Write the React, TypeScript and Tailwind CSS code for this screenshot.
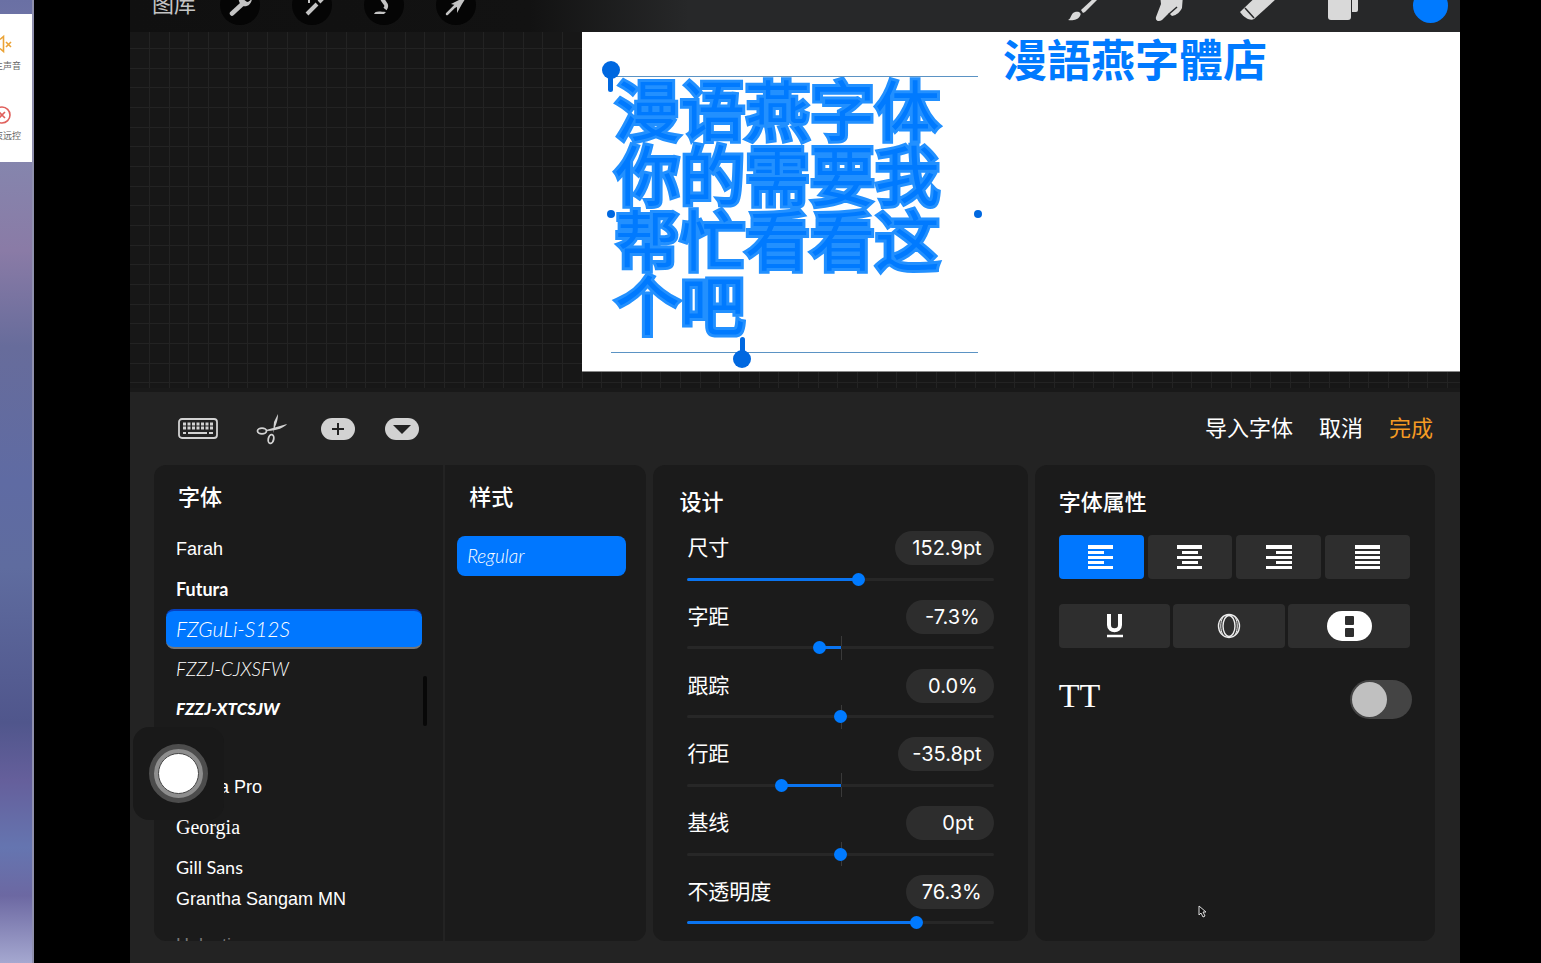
import { useState } from "react";
import type { CSSProperties, ReactNode } from "react";

type FontItem = { name: string; className: string };

const fonts: FontItem[] = [
  { name: "Farah", className: "h-10 items-center font-['Liberation_Sans',sans-serif] text-lg" },
  { name: "Futura", className: "h-10 items-center font-['Lato',sans-serif] text-lg font-bold" },
  { name: "FZGuLi-S12S", className: "h-10 items-center font-['Lato',sans-serif] text-[21px] font-light italic" },
  { name: "FZZJ-CJXSFW", className: "h-10 items-center font-['Lato',sans-serif] text-[19px] font-light italic" },
  { name: "FZZJ-XTCSJW", className: "h-10 items-center font-['Lato',sans-serif] text-[17px] font-black italic" },
  { name: "Geeza Pro", className: "mt-[38px] h-10 items-center font-['Liberation_Sans',sans-serif] text-lg" },
  { name: "Georgia", className: "h-10 items-center font-['Liberation_Serif',serif] text-xl" },
  { name: "Gill Sans", className: "h-10 items-center font-['Lato',sans-serif] text-lg" },
  { name: "Grantha Sangam MN", className: "h-[38px] items-start font-['Liberation_Sans',sans-serif] text-lg leading-6" },
  { name: "Helvetica", className: "h-10 items-center font-['Liberation_Sans',sans-serif] text-lg text-[#777]" },
];

type Setting = { id: string; label: string; value: string; percent: number; centered: boolean; box: string };

const settings: Setting[] = [
  { id: "size", label: "尺寸", value: "152.9pt", percent: 56, centered: false, box: "w-[99px] pr-3" },
  { id: "kerning", label: "字距", value: "-7.3%", percent: 43, centered: true, box: "w-[88px] pr-3.5" },
  { id: "tracking", label: "跟踪", value: "0.0%", percent: 50, centered: true, box: "w-[88px] pr-4" },
  { id: "leading", label: "行距", value: "-35.8pt", percent: 30, centered: true, box: "w-[96px] pr-3" },
  { id: "baseline", label: "基线", value: "0pt", percent: 50, centered: true, box: "w-[88px] pr-5" },
  { id: "opacity", label: "不透明度", value: "76.3%", percent: 76, centered: false, box: "w-[88px] pr-3" },
];

const alignments = [
  { label: "左对齐", lines: [[0, 25], [0, 16], [0, 25], [0, 16], [0, 25]] },
  { label: "居中", lines: [[0, 25], [5, 16], [0, 25], [5, 16], [0, 25]] },
  { label: "右对齐", lines: [[0, 26], [10, 16], [0, 26], [10, 16], [0, 26]] },
  { label: "两端对齐", lines: [[0, 25], [0, 25], [0, 25], [0, 25], [0, 25]] },
];

export default function App() {
  return (
    <div className="flex h-screen overflow-hidden bg-black font-['Roboto','Noto_Sans_CJK_SC',sans-serif] text-white">
      <DesktopStrip />
      <main className="relative mr-[81px] ml-24 flex min-w-0 flex-1 flex-col overflow-hidden bg-[#232323]">
        <TopBar />
        <Canvas />
        <TextPanel />
        <AssistiveButton />
      </main>
    </div>
  );
}

function DesktopStrip() {
  return (
    <aside className="w-[34px] shrink-0 overflow-hidden border-r-2 border-[#8f90ad] bg-[linear-gradient(to_bottom,#6a70a4_0%,#8585ad_17%,#8a7ba6_26%,#676c9b_36%,#5f6ba3_50%,#5f6c9f_59%,#50568c_75%,#655f9b_81%,#6575b0_88%,#6c68a2_93%,#a5a8d0_100%)] pt-3.5">
      <div className="flex h-[148px] flex-col bg-white text-[9px] leading-4 text-[#666]">
        <div className="mt-5 flex h-[70px] flex-col">
          <svg viewBox="0 0 12 20" className="h-5 w-3" fill="none" stroke="#eba336" strokeWidth="1.6">
            <path d="M0 5.500 3.500 2.500v15L0 14.500M6 8l5 5M11 8l-5 5" />
          </svg>
          <p className="mt-1 flex w-[21px] justify-end whitespace-nowrap">主声音</p>
        </div>
        <div className="flex flex-col">
          <svg viewBox="0 0 12 20" className="h-5 w-3" fill="none" stroke="#e0605c" strokeWidth="1.6">
            <circle cx="2" cy="11" r="8" />
            <path d="m-1 8 6 6M5 8l-6 6" />
          </svg>
          <p className="mt-1 flex w-[21px] justify-end whitespace-nowrap">束远控</p>
        </div>
      </div>
    </aside>
  );
}

function TopBar() {
  return (
    <header className="h-8 shrink-0 overflow-hidden bg-[linear-gradient(to_right,#101010_0%,#121212_30%,#272829_42%,#272829_100%)]">
      <div className="-mt-[22px] flex h-[54px] items-center justify-between pr-2.5 pl-[22px]">
        <div className="flex items-center gap-8 text-[#c4c4c4]">
          <button className="-mr-2 text-[22px] leading-8">图库</button>
          <ToolButton label="操作">
            <path d="M12 28.500 24 17.500" stroke="currentColor" strokeWidth="4.500" strokeLinecap="round" />
            <path d="M19 10c-1 5 0 9 4 11 4 1 8-1 9-7l-4 3-4-1-1-5Z" fill="currentColor" />
          </ToolButton>
          <ToolButton label="调整">
            <path d="m15 29 10-10M27 17l5-5" stroke="currentColor" strokeWidth="4" />
            <path d="M17 10v8M13 14h8" stroke="currentColor" strokeWidth="2" />
          </ToolButton>
          <ToolButton label="选取">
            <path d="M10 29c1-3 4-3 12-2l-2 2Z" fill="currentColor" />
            <path d="M18 13c1 5 7 6 3 11" fill="none" stroke="currentColor" strokeWidth="4" />
          </ToolButton>
          <ToolButton label="变换">
            <path d="m11 29 9-9" stroke="currentColor" strokeWidth="2.500" strokeLinecap="round" />
            <path d="m33 8-8 6-10 5 4 1-4 4 6-2v6l5-9Z" fill="currentColor" />
          </ToolButton>
        </div>
        <div className="flex items-center gap-[47px] text-[#d9d9d9]">
          <PaintButton label="绘画">
            <path d="M6 35c4-2 2-6 7-8 4-1 7 1 5 4-2 4-8 5-12 4Z" />
            <path d="m19 25 13-12 4 1-13 13-2 1Z" />
          </PaintButton>
          <PaintButton label="涂抹">
            <path d="m11 10 1 9-5 13c-1 4 3 5 6 3l7-7 3 3c5-1 8-4 10-8l1-13Z" />
            <path d="m20 29 8-7" fill="none" stroke="#272829" strokeWidth="1.500" />
          </PaintButton>
          <PaintButton label="擦除">
            <path d="M4 27 28 4l12 10-22 20c-3 2-9 0-14-7Z" />
            <path d="m9 23 9 10" stroke="#272829" strokeWidth="1.500" />
          </PaintButton>
          <PaintButton label="图层">
            <rect x="5" y="8" width="23" height="27" rx="3" />
            <path d="M29 5h6v20a2 2 0 0 1-2 2h-4Z" />
          </PaintButton>
          <button aria-label="颜色" className="flex w-10 justify-center">
            <span className="size-[35px] rounded-full bg-[#007aff]" />
          </button>
        </div>
      </div>
    </header>
  );
}

function ToolButton({ label, children }: { label: string; children: ReactNode }) {
  return (
    <button aria-label={label} className="size-10 rounded-full bg-[#050505]">
      <svg viewBox="0 0 40 40" className="size-10">{children}</svg>
    </button>
  );
}

function PaintButton({ label, children }: { label: string; children: ReactNode }) {
  return (
    <button aria-label={label} className="size-10">
      <svg viewBox="0 0 40 40" className="size-10" fill="currentColor">{children}</svg>
    </button>
  );
}

function Canvas() {
  const [text, setText] = useState("漫语燕字体你的需要我帮忙看看这个吧");

  return (
    <section className="relative h-[360px] shrink-0 overflow-hidden border-b-4 border-[#191919] bg-[#171717] bg-[linear-gradient(to_right,#232323_1px,transparent_1px_20px,#232323_20px_21px,transparent_21px_39px,#232323_39px_40px,transparent_40px),linear-gradient(to_bottom,#232323_1px,transparent_1px_20px,#232323_20px_21px,transparent_21px_39px,#232323_39px_40px,transparent_40px)] bg-[length:59px_59px] bg-[position:19px_16px]">
      <div className="absolute top-0 right-0 left-[452px] h-[340px] border-b border-[#888] bg-white">
        <p className="absolute top-0 left-[421px] text-[44px] leading-[60px] font-bold whitespace-nowrap text-[#007aff]">漫語燕字體店</p>
        <div className="absolute top-11 left-[29px] h-[277px] w-[367px] border-y border-[#5b93c4]">
          <textarea
            aria-label="文本"
            value={text}
            onChange={(event) => setText(event.target.value)}
            spellCheck={false}
            className="block size-full resize-none overflow-hidden bg-transparent pt-1 pl-1 text-[65px] leading-[65px] font-normal text-[#007aff] outline-none [paint-order:stroke_fill] [stroke-linejoin:round] [-webkit-text-stroke:6px_#2290ff]"
          />
          <span className="absolute -top-4 -left-[9px] size-[18px] rounded-full bg-[#0068e0]" />
          <span className="absolute top-0 -left-[3px] h-[15px] w-[5px] rounded-b bg-[#0068e0]" />
          <span className="absolute top-[260px] left-[129px] h-4 w-[5px] rounded-t bg-[#0068e0]" />
          <span className="absolute top-[273px] left-[122px] size-[18px] rounded-full bg-[#0068e0]" />
          <span className="absolute top-[133px] -left-1 size-2 rounded-sm bg-[#0068e0]" />
          <span className="absolute top-[133px] -right-1 size-2 rounded-full bg-[#0068e0]" />
        </div>
      </div>
    </section>
  );
}

function TextPanel() {
  return (
    <section className="flex min-h-0 flex-1 flex-col pr-[25px] pb-[22px] pl-6">
      <div className="flex h-[73px] shrink-0 items-center justify-between pr-0.5 pl-6">
        <div className="flex items-center text-[#d2d2d2]">
          <button aria-label="键盘">
            <KeyboardIcon />
          </button>
          <button aria-label="剪切" className="ml-[38px]">
            <ScissorsIcon />
          </button>
          <button aria-label="添加" className="ml-[33px]">
            <svg viewBox="0 0 34 22" className="h-[22px] w-[34px]">
              <rect width="34" height="22" rx="11" fill="currentColor" />
              <path d="M17 5v12M11 11h12" stroke="#222" strokeWidth="2" />
            </svg>
          </button>
          <button aria-label="收起" className="ml-[30px]">
            <svg viewBox="0 0 34 22" className="h-[22px] w-[34px]">
              <rect width="34" height="22" rx="11" fill="currentColor" />
              <path d="M8 7h18l-9 9Z" fill="#222" />
            </svg>
          </button>
        </div>
        <div className="flex gap-[26px] text-[22px] leading-8">
          <button>导入字体</button>
          <button>取消</button>
          <button className="text-[#f59b23]">完成</button>
        </div>
      </div>

      <div className="grid min-h-0 flex-1 grid-cols-[492fr_374fr_400fr] gap-[7px]">
        <div className="grid min-h-0 grid-cols-[289fr_203fr] overflow-hidden rounded-xl bg-[#1b1b1b]">
          <FontList />
          <div className="border-l-2 border-[#232323] pt-[17px] pr-5 pl-3">
            <h2 className="pl-3 text-[22px] leading-8 font-medium">样式</h2>
            <button className="mt-[22px] flex h-10 w-full items-center rounded-lg bg-[#0077ff] pl-2.5 font-['Lato',sans-serif] text-[19px] font-light italic">
              Regular
            </button>
          </div>
        </div>
        <DesignCard />
        <AttributesCard />
      </div>
    </section>
  );
}

function FontList() {
  const [selected, setSelected] = useState("FZGuLi-S12S");

  return (
    <div className="relative min-h-0 overflow-hidden pt-[17px] pr-[21px] pl-3">
      <h2 className="pl-3 text-[22px] leading-8 font-medium">字体</h2>
      <ul className="mt-[15px]">
        {fonts.map((font) => (
          <li key={font.name}>
            <button
              onClick={() => setSelected(font.name)}
              className={`flex w-full pl-2.5 whitespace-nowrap ${font.className} ${
                font.name === selected ? "rounded-lg border-t-2 border-b-2 border-t-[#0740c0] border-b-[#777] bg-[#0077ff]" : ""
              }`}
            >
              {font.name}
            </button>
          </li>
        ))}
      </ul>
      <span className="absolute top-[211px] right-4 h-[50px] w-1 rounded-full bg-[#080808]" />
    </div>
  );
}

function DesignCard() {
  return (
    <div className="flex min-h-0 flex-col rounded-xl bg-[#1b1b1b] pt-[22px] pr-[34px] pb-3 pl-[34px]">
      <h2 className="-ml-2 text-[22px] leading-8 font-medium">设计</h2>
      <div className="mt-3 flex flex-1 flex-col justify-between">
        {settings.map((item) => (
          <SettingRow key={item.id} item={item} />
        ))}
      </div>
    </div>
  );
}

function SettingRow({ item }: { item: Setting }) {
  const [percent, setPercent] = useState(item.percent);
  const from = item.centered ? Math.min(percent, 50) : 0;
  const to = item.centered ? Math.max(percent, 50) : percent;
  const track: CSSProperties = {
    backgroundImage: `linear-gradient(to right, transparent ${from}%, #0a74f0 ${from}%, #0a74f0 ${to}%, transparent ${to}%)`,
  };

  return (
    <div>
      <div className="flex h-[34px] items-center justify-between">
        <label htmlFor={item.id} className="text-[21px] leading-8">{item.label}</label>
        <input
          type="text"
          aria-label={`${item.label}数值`}
          defaultValue={item.value}
          className={`h-[34px] rounded-full bg-[#2d2d2d] text-right font-['Inter',sans-serif] text-xl outline-none ${item.box}`}
        />
      </div>
      <div className="relative mt-2 flex h-3 items-center">
        {item.centered && <span className="absolute -top-1.5 left-1/2 h-6 w-px bg-[#3a3a3a]" />}
        <input
          id={item.id}
          type="range"
          value={percent}
          onChange={(event) => setPercent(Number(event.target.value))}
          style={track}
          className="relative h-[3px] w-full appearance-none rounded-full bg-[#272727] outline-none [&::-webkit-slider-thumb]:size-[13px] [&::-webkit-slider-thumb]:appearance-none [&::-webkit-slider-thumb]:rounded-full [&::-webkit-slider-thumb]:bg-[#007aff]"
        />
      </div>
    </div>
  );
}

function AttributesCard() {
  const [align, setAlign] = useState(0);

  return (
    <div className="rounded-xl bg-[#1b1b1b] pt-[22px] pr-[25px] pl-6">
      <h2 className="text-[22px] leading-8 font-medium">字体属性</h2>
      <div className="mt-4 grid grid-cols-4 gap-1">
        {alignments.map((item, index) => (
          <button
            key={item.label}
            aria-label={item.label}
            onClick={() => setAlign(index)}
            className={`flex h-11 items-center justify-center rounded ${index === align ? "bg-[#0077ff]" : "bg-[#2e2e2e]"}`}
          >
            <svg viewBox="0 0 26 24" className="h-6 w-[26px]" fill="#fff">
              {item.lines.map(([x, width], line) => (
                <rect key={line} x={x} y={line * 5 + (line === 0 ? 0 : 1)} width={width} height={line === 0 ? 4 : 3} />
              ))}
            </svg>
          </button>
        ))}
      </div>
      <div className="mt-[25px] grid grid-cols-[112fr_112fr_122fr] gap-[3px]">
        <button aria-label="下划线" className="flex h-11 items-center justify-center rounded bg-[#2e2e2e]">
          <svg viewBox="0 0 18 24" className="h-6 w-[18px]" fill="none" stroke="#fff">
            <path d="M3 0v11c0 7 11 7 11 0V0" strokeWidth="4" />
            <path d="M1 22h16" strokeWidth="2.500" />
          </svg>
        </button>
        <button aria-label="轮廓" className="flex h-11 items-center justify-center rounded bg-[#2e2e2e]">
          <svg viewBox="0 0 24 26" className="h-[26px] w-6" fill="none" stroke="#eee" strokeWidth="1.400">
            <ellipse cx="12" cy="13" rx="10.500" ry="11.500" />
            <ellipse cx="12" cy="13" rx="6" ry="10.500" />
            <path d="M6 4c-3 5-3 13 0 18M18 4c3 5 3 13 0 18" strokeWidth="1" />
          </svg>
        </button>
        <button aria-label="竖排" className="flex h-11 items-center justify-center rounded bg-[#2e2e2e]">
          <svg viewBox="0 0 45 30" className="h-[30px] w-[45px]">
            <rect width="45" height="30" rx="15" fill="#fff" />
            <rect x="18" y="5" width="9" height="9" rx="1" fill="#2e2e2e" />
            <rect x="18" y="17" width="9" height="9" rx="1" fill="#2e2e2e" />
          </svg>
        </button>
      </div>
      <div className="-mr-0.5 mt-8 flex items-start justify-between">
        <label htmlFor="caps" className="font-['Liberation_Serif',serif] text-[34px] leading-8">TT</label>
        <input
          id="caps"
          type="checkbox"
          role="switch"
          className="relative h-[39px] w-[62px] appearance-none rounded-full bg-[#444] before:absolute before:top-[2px] before:left-[2px] before:size-[35px] before:rounded-full before:bg-[#c0c0c0] checked:bg-[#0077ff] checked:before:left-[25px]"
        />
      </div>
    </div>
  );
}

function KeyboardIcon() {
  return (
    <svg viewBox="0 0 40 22" className="h-[22px] w-10" fill="none" stroke="currentColor">
      <rect x="1" y="1" width="38" height="19" rx="3" strokeWidth="1.800" />
      <path d="M5 6h30M5 10h30" strokeWidth="2.800" strokeDasharray="3 1.500" />
      <path d="M5 15h3M10 15h19M31 15h4" strokeWidth="2" />
    </svg>
  );
}

function ScissorsIcon() {
  return (
    <svg viewBox="0 0 32 32" className="size-8" fill="none" stroke="currentColor" strokeWidth="1.800">
      <ellipse cx="6" cy="18" rx="4.500" ry="2.800" />
      <ellipse cx="15" cy="26" rx="2.700" ry="4.500" transform="rotate(12 15 26)" />
      <path d="M10 17 31 11c-2 3-10 7-20 7ZM17 20l1-11 4-8c0 6-2 11-3 13Z" fill="currentColor" stroke="none" />
    </svg>
  );
}

function AssistiveButton() {
  return (
    <>
      <div className="absolute bottom-[143px] left-[3px] flex h-[93px] w-[91px] items-center justify-center rounded-2xl bg-[#191919]">
        <button aria-label="辅助触控" className="flex size-[59px] items-center justify-center rounded-full border-[5px] border-[#4c4c4c] bg-[#8e8e8e]">
          <span className="size-[41px] rounded-full border border-[#444] bg-white" />
        </button>
      </div>
      <svg viewBox="0 0 10 14" className="absolute right-[252px] bottom-11 h-3.5 w-2.5" fill="#111" stroke="#ddd">
        <path d="M1 1v9l2-2 2 4 2-1-2-4h3Z" />
      </svg>
    </>
  );
}
